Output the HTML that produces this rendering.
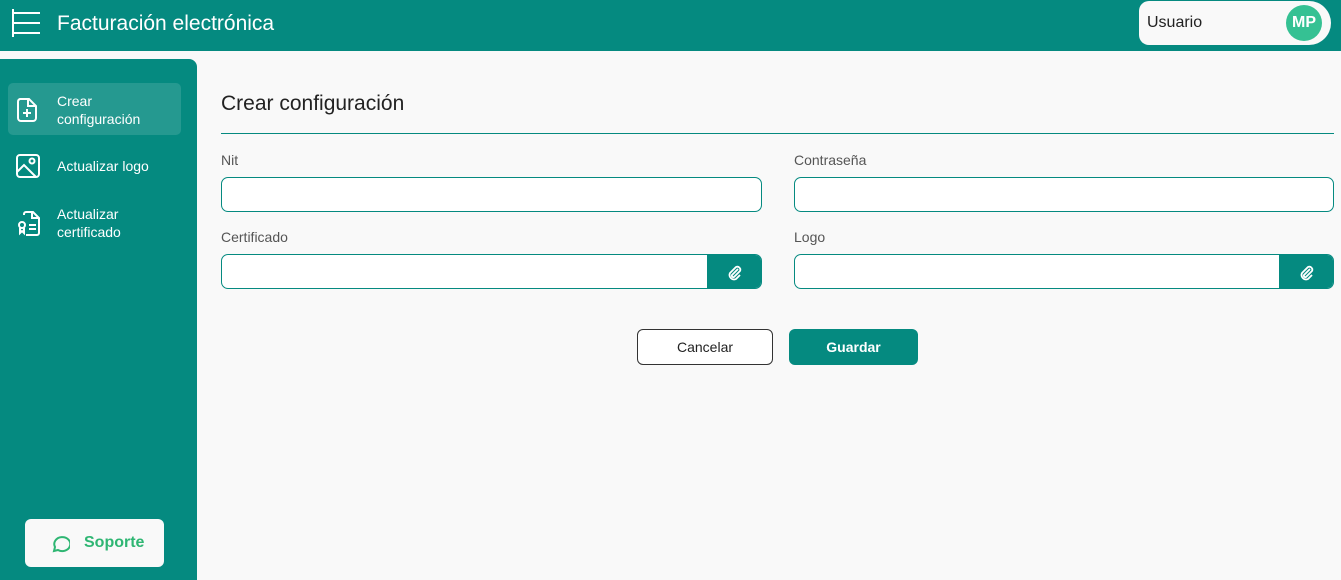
<!DOCTYPE html>
<html><head><meta charset="utf-8"><style>
*{box-sizing:border-box;margin:0;padding:0}
body{width:1341px;height:580px;overflow:hidden;background:#f9f9f9;font-family:"Liberation Sans",Roboto,sans-serif;position:relative}
.hdr{position:absolute;left:0;top:0;width:1341px;height:51px;background:#058a80}
.ttl{position:absolute;left:57px;top:12px;color:#fff;font-size:21px}
.user{position:absolute;left:1139px;top:1px;width:192px;height:44px;background:#f9f9f9;border-radius:10px 22px 22px 10px}
.user span{position:absolute;left:8px;top:13px;font-size:16px;color:#222}
.av{position:absolute;left:147px;top:4px;width:36px;height:36px;border-radius:50%;background:#35c193;color:#fff;font-weight:bold;font-size:16px;text-align:center;line-height:36px}
.side{position:absolute;left:0;top:59px;width:197px;height:521px;background:#058a80;border-radius:0 8px 0 0}
.act{position:absolute;left:8px;top:24px;width:173px;height:52px;background:rgba(255,255,255,.13);border-radius:5px}
.it{position:absolute;left:57px;color:#fff;font-size:14px;line-height:18px}
.ic{position:absolute;left:16px}
.sup{position:absolute;left:25px;top:460px;width:139px;height:48px;background:#f9f9f9;border-radius:6px;color:#2fb673;font-weight:bold;font-size:16px}
h1{position:absolute;left:221px;top:92px;font-size:21px;font-weight:normal;color:#222}
.line{position:absolute;left:221px;top:133px;width:1113px;height:1px;background:#058a80}
.lb{position:absolute;font-size:14px;color:#555}
.in{position:absolute;height:35px;border:1px solid #058a80;border-radius:7px;background:#fff;overflow:hidden}
.clip{position:absolute;right:0;top:0;width:54px;height:100%;background:#058a80}
.btn{position:absolute;top:329px;height:36px;border-radius:6px;font-size:14px;text-align:center;line-height:34px}
</style></head><body>
<div class="hdr">
<svg style="position:absolute;left:12px;top:9px" width="30" height="28"><path d="M1 0V28M1 4H28M1 14H28M1 24H28" stroke="#fff" stroke-width="2" fill="none"/></svg>
<div class="ttl">Facturación electrónica</div>
<div class="user"><span>Usuario</span><div class="av">MP</div></div>
</div>
<div class="side">
<div class="act"></div>
<svg class="ic" style="top:38px" width="24" height="26" fill="none" stroke="#fff" stroke-width="2"><path d="M4 2H13L20 9V21A3 3 0 0 1 17 24H5A3 3 0 0 1 2 21V5A3 3 0 0 1 4 2ZM12 2V9H20M11 12V20M7 16H15"/></svg>
<div class="it" style="top:33px">Crear<br>configuración</div>
<svg class="ic" style="top:95px" width="25" height="25" fill="none" stroke="#fff" stroke-width="2"><rect x="1" y="1" width="22" height="22" rx="3"/><circle cx="16" cy="7" r="2.5"/><path d="M1 18L8 11L20 23"/></svg>
<div class="it" style="top:98px">Actualizar logo</div>
<svg class="ic" style="top:152px" width="26" height="26" fill="none" stroke="#fff" stroke-width="2"><path d="M8 4V3A2 2 0 0 1 10 1H17L23 7V22A2 2 0 0 1 21 24H10M16 1V7H23M13 14H20M13 18H20"/><circle cx="6" cy="14" r="3"/><path d="M4 17V22L6 20L8 22V17"/></svg>
<div class="it" style="top:146px">Actualizar<br>certificado</div>
<div class="sup"><svg style="position:absolute;left:26px;top:15px" width="19" height="19" fill="none" stroke="#2fb673" stroke-width="2"><path d="M3 17L4 13A8 7 0 1 1 7 16Z"/></svg><span style="position:absolute;left:59px;top:15px">Soporte</span></div>
</div>
<h1>Crear configuración</h1>
<div class="line"></div>
<div class="lb" style="left:221px;top:152px">Nit</div>
<div class="lb" style="left:794px;top:152px">Contraseña</div>
<div class="in" style="left:221px;top:177px;width:541px"></div>
<div class="in" style="left:794px;top:177px;width:540px"></div>
<div class="lb" style="left:221px;top:229px">Certificado</div>
<div class="lb" style="left:794px;top:229px">Logo</div>
<div class="in" style="left:221px;top:254px;width:541px"><div class="clip"><svg style="position:absolute;left:18px;top:8px" width="18" height="18" fill="none" stroke="#fff" stroke-width="1.8"><path d="M13 6L7 12A1.5 1.5 0 0 0 9 14L15 8A3 3 0 0 0 11 4L5 10A4.5 4.5 0 0 0 11 16L15 12"/></svg></div></div>
<div class="in" style="left:794px;top:254px;width:540px"><div class="clip"><svg style="position:absolute;left:18px;top:8px" width="18" height="18" fill="none" stroke="#fff" stroke-width="1.8"><path d="M13 6L7 12A1.5 1.5 0 0 0 9 14L15 8A3 3 0 0 0 11 4L5 10A4.5 4.5 0 0 0 11 16L15 12"/></svg></div></div>
<div class="btn" style="left:637px;width:136px;border:1px solid #333;background:#fff;color:#222">Cancelar</div>
<div class="btn" style="left:789px;width:129px;background:#058a80;color:#fff;font-weight:bold;line-height:36px">Guardar</div>
</body></html>
